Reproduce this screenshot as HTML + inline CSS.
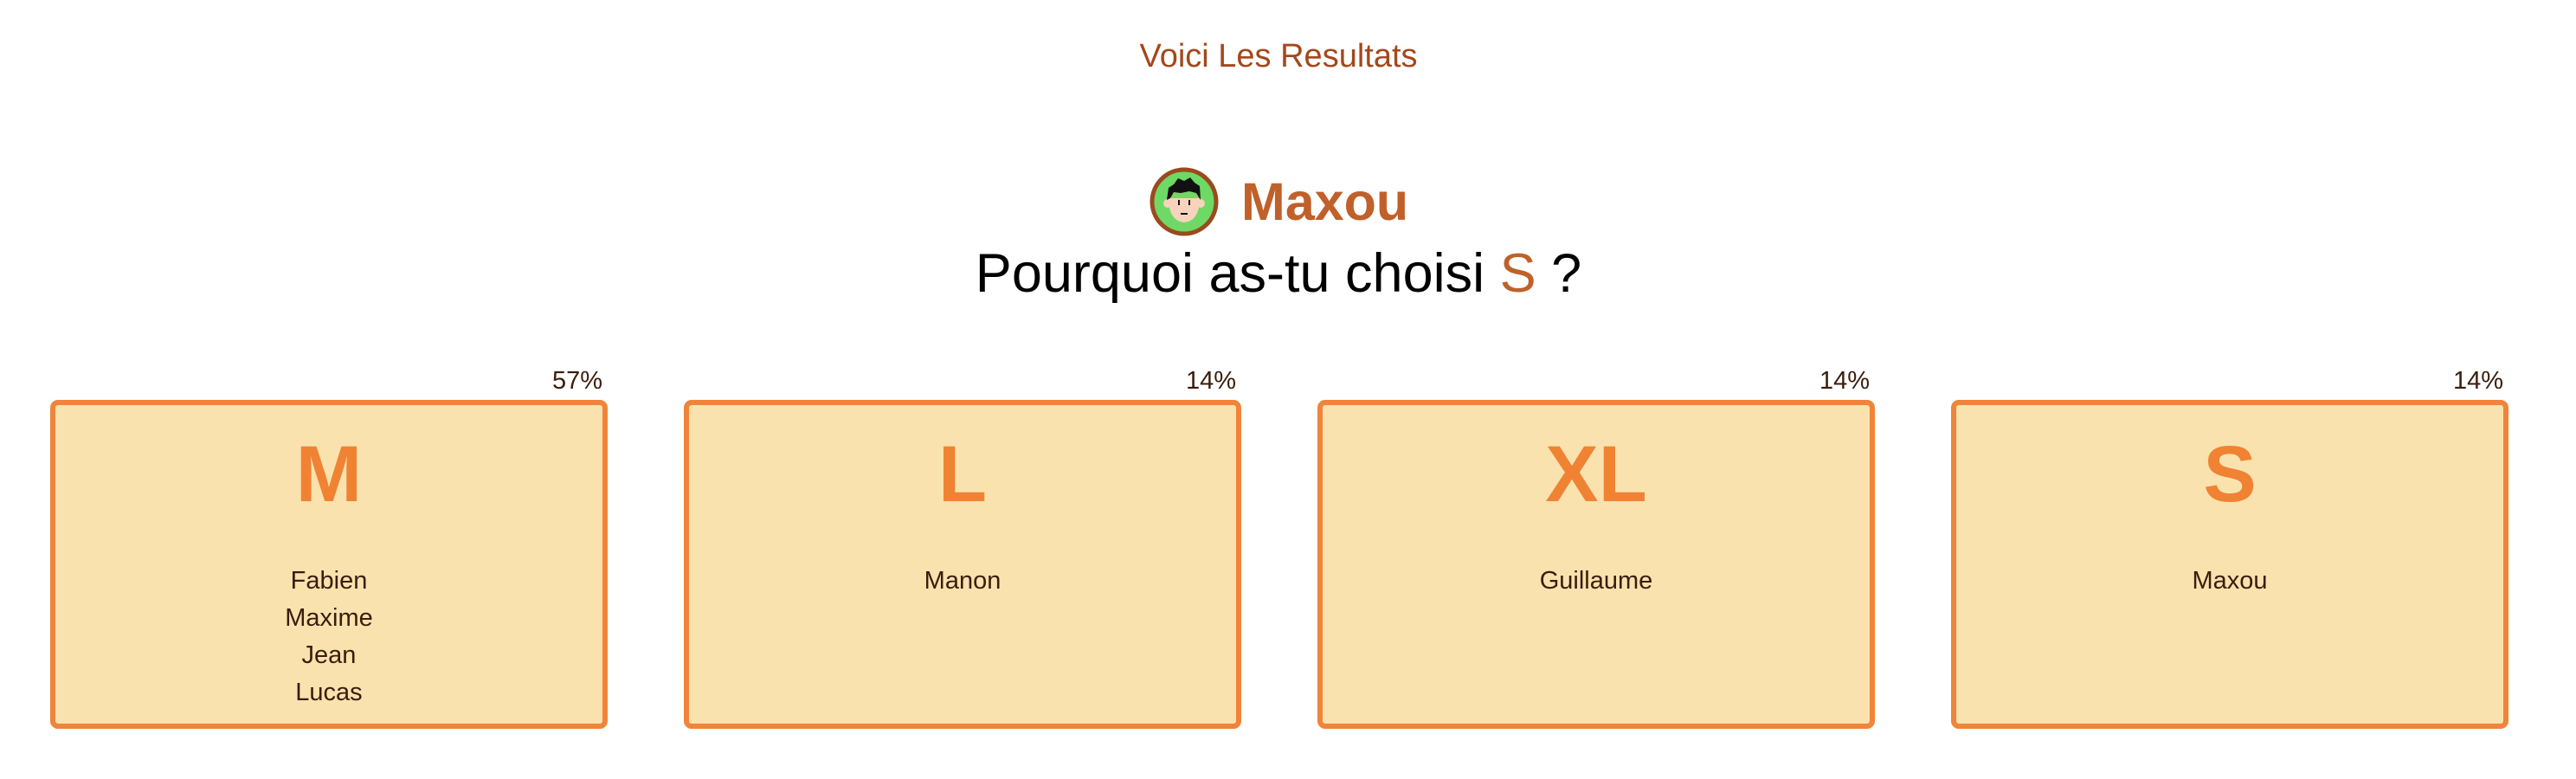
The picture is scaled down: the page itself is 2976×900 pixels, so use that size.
<!DOCTYPE html>
<html><head><meta charset="utf-8"><style>
body{margin:0;width:2976px;height:900px;background:#fff;font-family:"Liberation Sans",sans-serif;position:relative;overflow:hidden}
.t{position:absolute;left:0;width:2954px;text-align:center}
.card{position:absolute;top:462px;width:632px;height:368px;border:6px solid #f0843a;border-radius:9px;background:#f9e2ad;text-align:center;color:#3a1d0c}
.pct{position:absolute;top:424px;font-size:29px;color:#3a1d0c;text-align:right;width:636px}
.big{font-size:92px;font-weight:bold;color:#f08233;margin-top:30px;line-height:100px}
.names{margin-top:52px;font-size:29px;line-height:43px}
</style></head><body>
<div class="t" style="top:44px;font-size:38px;color:#a3481c">Voici Les Resultats</div>
<svg style="position:absolute;left:1328px;top:193px" width="80" height="80" viewBox="0 0 80 80">
<ellipse cx="40" cy="40" rx="37" ry="37" fill="#6fd965" stroke="#9a4a1e" stroke-width="5"/>
<path d="M22 36 Q22 62 40 64 Q58 62 58 36 Z" fill="#f7d3bd"/>
<ellipse cx="21" cy="42" rx="5" ry="5" fill="#f7d3bd"/><ellipse cx="59" cy="42" rx="5" ry="5" fill="#f7d3bd"/>
<path d="M20 38 L22 24 L28 20 L33 13 L40 16 L47 12 L52 18 L58 22 L59 38 L54 30 L46 28 L36 30 L28 29 L24 36 Z" fill="#111"/>
<path d="M34 38 v6 M46 38 v6 M36 54 h8" stroke="#111" stroke-width="2"/>
</svg>
<div style="position:absolute;left:1434px;top:198px;font-size:61px;font-weight:bold;color:#c0602a">Maxou</div>
<div class="t" style="top:280px;font-size:63px;color:#000">Pourquoi as-tu choisi <span style="color:#c0602a">S</span> ?</div>

<div class="pct" style="left:60px">57%</div>
<div class="pct" style="left:792px">14%</div>
<div class="pct" style="left:1524px">14%</div>
<div class="pct" style="left:2256px">14%</div>

<div class="card" style="left:58px"><div class="big">M</div><div class="names">Fabien<br>Maxime<br>Jean<br>Lucas</div></div>
<div class="card" style="left:790px"><div class="big">L</div><div class="names">Manon</div></div>
<div class="card" style="left:1522px"><div class="big">XL</div><div class="names">Guillaume</div></div>
<div class="card" style="left:2254px"><div class="big">S</div><div class="names">Maxou</div></div>
</body></html>
